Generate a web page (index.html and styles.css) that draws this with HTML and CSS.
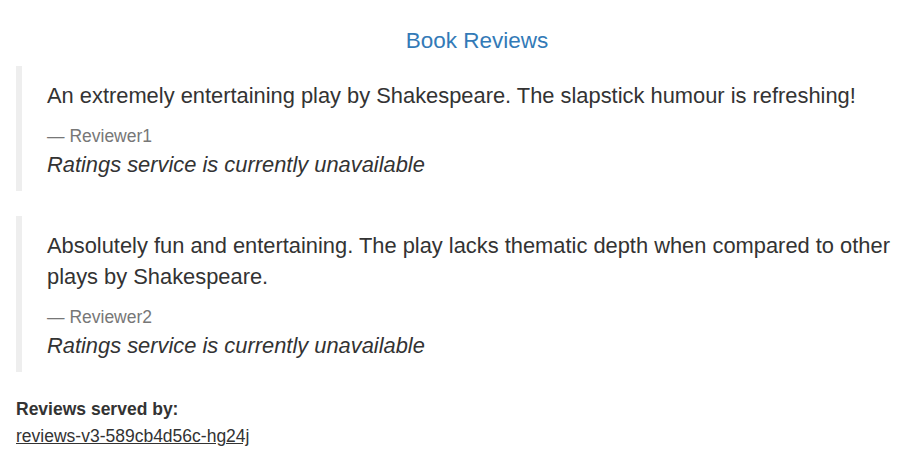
FILE: index.html
```html
<!DOCTYPE html>
<html>
<head>
<meta charset="utf-8">
<link rel="stylesheet" href="styles.css">
</head>
<body>
<div class="page">
  <h4 class="title">Book Reviews</h4>
  <blockquote class="review">
    <p class="text">An extremely entertaining play by Shakespeare. The slapstick humour is refreshing!</p>
    <small class="author">Reviewer1</small>
    <p class="rating"><i>Ratings service is currently unavailable</i></p>
  </blockquote>
  <blockquote class="review">
    <p class="text">Absolutely fun and entertaining. The play lacks thematic depth when compared to other plays by Shakespeare.</p>
    <small class="author">Reviewer2</small>
    <p class="rating"><i>Ratings service is currently unavailable</i></p>
  </blockquote>
  <dl class="served">
    <dt>Reviews served by:</dt>
    <dd><u>reviews-v3-589cb4d56c-hg24j</u></dd>
  </dl>
</div>
</body>
</html>
```
FILE: styles.css
```css
html, body {
  margin: 0;
  padding: 0;
  background: #fff;
  overflow: hidden;
}
body {
  font-family: "Liberation Sans", Arial, Helvetica, sans-serif;
  font-size: 17.5px;
  line-height: 1.42857;
  color: #333;
}
.page {
  width: 922px;
  padding: 16.5px 0 0 16px;
}
.title {
  margin: 12.5px 0 12.5px;
  font-size: 22.5px;
  font-weight: 400;
  line-height: 1.1;
  text-align: center;
  color: #337ab7;
}
.review {
  margin: 0 0 25px;
  padding: 14px 25px 11px;
  border-left: 6.25px solid #eee;
  font-size: 21.875px;
}
.review p {
  margin: 0 0 12.5px;
}
.review p:last-child {
  margin-bottom: 0;
}
.author {
  display: block;
  font-size: 80%;
  line-height: 1.42857;
  color: #777;
}
.author::before {
  content: "\2014 \00A0";
}
.served {
  margin: 0;
}
.served dt {
  font-weight: 700;
  line-height: 1.42857;
}
.served dd {
  margin: 2px 0 0;
  line-height: 1.42857;
}
```
